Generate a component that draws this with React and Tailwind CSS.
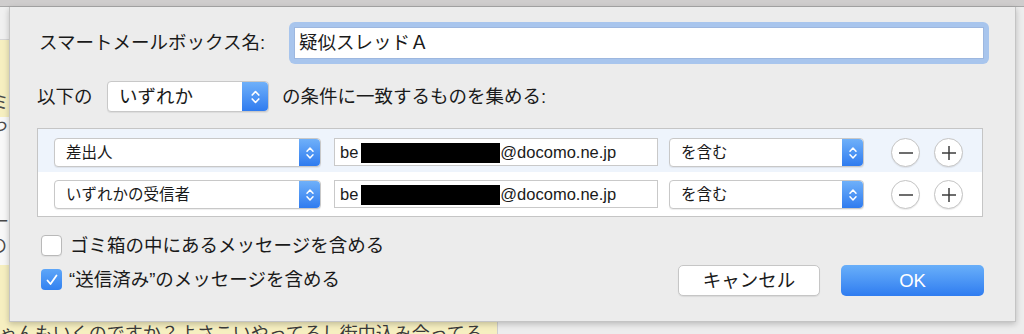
import React from "react";

const FONT = "font-['Liberation_Sans','Noto_Sans_CJK_JP',sans-serif]";

function Stepper({ big }) {
    return (
        <span
            className={
                big
                    ? "flex w-[26px] shrink-0 items-center justify-center rounded-r-[4px] bg-linear-to-b from-[#6fb0f9] to-[#2f7bef]"
                    : "flex w-[21px] shrink-0 items-center justify-center rounded-r-[4px] bg-linear-to-b from-[#6fb0f9] to-[#2f7bef]"
            }
        >
            <svg width={big ? 11 : 10} height={big ? 18 : 16} viewBox="0 0 10 16" fill="none">
                <polyline points="2,6.2 5,3 8,6.2" stroke="white" strokeWidth="1.5" strokeLinecap="round" strokeLinejoin="round" />
                <polyline points="2,9.8 5,13 8,9.8" stroke="white" strokeWidth="1.5" strokeLinecap="round" strokeLinejoin="round" />
            </svg>
        </span>
    );
}

function Popup({ label, className, big }) {
    return (
        <div className={`flex shrink-0 rounded-[4px] border border-[#c8c8c8] bg-white shadow-[0_1px_1px_rgba(0,0,0,0.07)] ${className}`}>
            <span className={big ? "flex flex-1 items-center pl-[11px] text-[18.5px] text-[#1a1a1a]" : "flex flex-1 items-center pl-[11px] text-[15.5px] text-[#1a1a1a]"}>
                {label}
            </span>
            <Stepper big={big} />
        </div>
    );
}

function RoundButton({ plus }) {
    return (
        <span className="flex h-[29px] w-[29px] shrink-0 items-center justify-center rounded-full border border-[#c4c4c4] bg-white shadow-[0_1px_1px_rgba(0,0,0,0.08)]">
            <svg width="16" height="16" viewBox="0 0 16 16">
                <line x1="1" y1="8" x2="15" y2="8" stroke="#3c3c3c" strokeWidth="1.5" />
                {plus && <line x1="8" y1="1" x2="8" y2="15" stroke="#3c3c3c" strokeWidth="1.5" />}
            </svg>
        </span>
    );
}

function CriteriaRow({ from, className }) {
    return (
        <div className={`flex items-start pl-[16px] ${className}`}>
            <Popup label={from} className="h-[29px] w-[267px]" />
            <div className="ml-[13px] flex h-[28px] w-[324px] shrink-0 items-center border border-[#c9c9c9] bg-white pl-[5px] text-[16.5px] text-[#1a1a1a]">
                <span>be</span>
                <span className="ml-[3px] mt-[1px] h-[20px] w-[139px] bg-black" />
                <span>@docomo.ne.jp</span>
            </div>
            <Popup label="を含む" className="ml-[11px] h-[29px] w-[195px]" />
            <span className="ml-[27px]">
                <RoundButton />
            </span>
            <span className="ml-[14px]">
                <RoundButton plus />
            </span>
        </div>
    );
}

export default function App() {
    return (
        <div className={`relative h-[334px] w-[1024px] overflow-hidden bg-[#ececec] ${FONT}`}>
            {/* window behind the sheet */}
            <div className="h-[7px] border-b border-[#a8a8a8] bg-[#cfcdcd]" />
            <div className="flex">
                <div className="w-[498px] border-r border-[#cfcfcf] text-[18px] text-[#4a4a4a]">
                    <div className="h-[33px] border-b border-[#d6d6d6] bg-[#f0f0f0]" />
                    <div className="h-[77px] bg-[#f6efc0] pt-[52px]">
                        <p className="ml-[-9px] leading-[22px] whitespace-nowrap">ミ:</p>
                        <p className="ml-[-9px] leading-[22px] whitespace-nowrap">っ</p>
                    </div>
                    <div className="h-[148px] bg-[#f8f8f8] pt-[93px]">
                        <p className="ml-[-9px] leading-[24px] whitespace-nowrap">ーラ</p>
                        <p className="ml-[-11px] leading-[24px] whitespace-nowrap">の</p>
                    </div>
                    <div className="h-[80px] bg-[#f6efc0] pt-[57px]">
                        <p className="ml-[-1px] text-[18px] leading-[24px] whitespace-nowrap text-[#3a3a3a]">
                            ゃんもいくのですか？よさこいやってるし街中込み合ってる
                        </p>
                    </div>
                </div>
                <div className="flex-1 bg-[#ededed]" />
            </div>

            {/* sheet dialog */}
            <div className="absolute left-[9px] top-[7px] h-[315px] w-[1007px] border-x border-b border-[#c4c4c4] bg-[#ececec] pl-[27px] text-[#1a1a1a] shadow-[0_2px_6px_rgba(0,0,0,0.22)]">
                <div className="flex items-center pt-[15px]">
                    <span className="w-[252px] pl-[2px] text-[18.5px]">スマートメールボックス名:</span>
                    <div className="h-[42px] w-[700px] rounded-[6px] bg-[#a8c5ed] p-[5px]">
                        <div className="flex h-full items-center border border-[#9db7df] bg-white pl-[4px] text-[18.5px]">
                            疑似スレッドＡ
                        </div>
                    </div>
                </div>

                <div className="mt-[17px] flex h-[31px] items-center text-[18.5px]">
                    <span className="w-[70px]">以下の</span>
                    <Popup big label="いずれか" className="h-[31px] w-[162px]" />
                    <span className="ml-[13px]">の条件に一致するものを集める:</span>
                </div>

                <div className="mt-[16px] w-[946px] border border-[#c5c5c5] bg-white">
                    <CriteriaRow from="差出人" className="h-[43px] bg-[#eef4fc] pt-[9px]" />
                    <CriteriaRow from="いずれかの受信者" className="h-[44px] bg-white pt-[8px]" />
                </div>

                <div className="flex w-[947px] justify-between">
                    <div className="mt-[18px] pl-[4px] text-[18.5px]">
                        <div className="flex h-[21px] items-center">
                            <span className="h-[21px] w-[21px] shrink-0 rounded-[4px] border border-[#b9b9b9] bg-white shadow-[0_1px_1px_rgba(0,0,0,0.06)]" />
                            <span className="ml-[8px] whitespace-nowrap">ゴミ箱の中にあるメッセージを含める</span>
                        </div>
                        <div className="mt-[13px] flex h-[21px] items-center">
                            <span className="flex h-[21px] w-[21px] shrink-0 items-center justify-center rounded-[4px] bg-linear-to-b from-[#5ea6f8] to-[#3281f0]">
                                <svg width="14" height="14" viewBox="0 0 14 14" fill="none">
                                    <polyline points="2.5,7.5 5.5,11 11.5,2.5" stroke="white" strokeWidth="1.8" strokeLinecap="round" strokeLinejoin="round" />
                                </svg>
                            </span>
                            <span className="ml-[7px] whitespace-nowrap">“送信済み”のメッセージを含める</span>
                        </div>
                    </div>
                    <div className="mt-[48px] flex gap-[21px] text-[18.5px]">
                        <button className="h-[31px] w-[142px] rounded-[5px] border border-[#c6c6c6] bg-white text-[#1a1a1a] shadow-[0_1px_1px_rgba(0,0,0,0.08)]">
                            キャンセル
                        </button>
                        <button className="h-[31px] w-[143px] rounded-[5px] bg-linear-to-b from-[#69aff9] to-[#2f7cf0] text-white">
                            OK
                        </button>
                    </div>
                </div>
            </div>
        </div>
    );
}
